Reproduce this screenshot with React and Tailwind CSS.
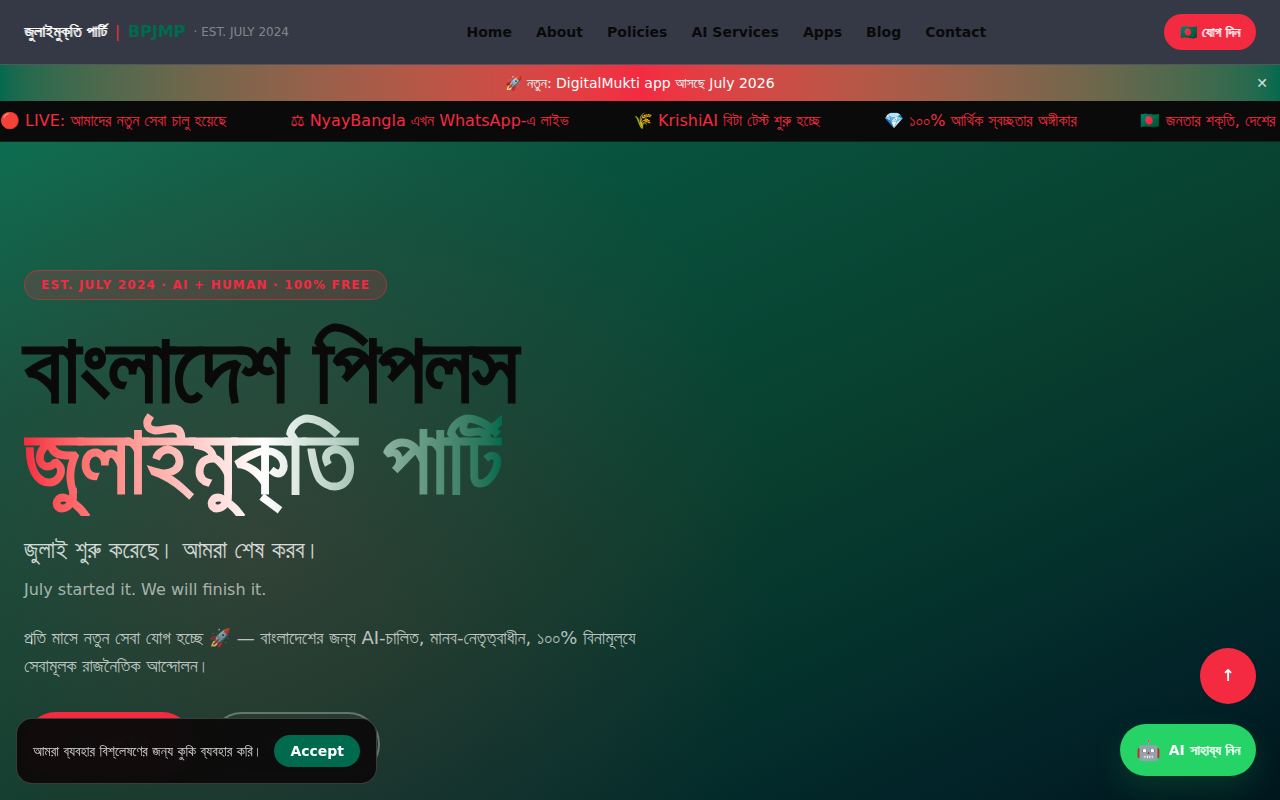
import { useState } from 'react';

const navLinks = ['Home', 'About', 'Policies', 'AI Services', 'Apps', 'Blog', 'Contact'];

// Keeps conjuncts joined inside a word
const Joined = ({ children }) => (
  <span className="[font-feature-settings:normal]">{children}</span>
);

const tickerItems = [
  { icon: '🔴', text: 'LIVE: আমাদের নতুন সেবা চালু হয়েছে' },
  { icon: '⚖', text: 'NyayBangla এখন WhatsApp-এ লাইভ' },
  { icon: '🌾', text: <Joined>KrishiAI বিটা টেস্ট শুরু হচ্ছে</Joined> },
  { icon: '💎', text: <>১০০% আর্থিক স্ব<Joined>চ্ছতার অঙ্গীকার</Joined></> },
  { icon: '🇧🇩', text: 'জনতার শক্তি, দেশের মুক্তি', flag: true }
];

// FreeSans has no bold Bengali face, so the weight is thickened by hand
const BoldBn = ({ children }) => (
  <span className="font-normal [text-shadow:1px_0_currentColor]">{children}</span>
);

const Header = () => (
  <header className="sticky top-0 z-40 border-b border-white/15 bg-[#353945]">
    <div className="flex h-16 items-center justify-between px-6">
      <a href="#home" className="flex items-center gap-2">
        <span className="text-white"><BoldBn>জুলাইমুক্তি পার্টি</BoldBn></span>
        <span className="text-[#f42a41]">|</span>
        <span className="font-bold text-[#006a4e]">BPJMP</span>
        <span className="text-xs text-white/40">· EST. JULY 2024</span>
      </a>
      <nav className="flex items-center gap-6">
        {navLinks.map(link => (
          <a key={link} href={`#${link}`} className="text-sm font-semibold text-[#0a0a0a]">
            {link}
          </a>
        ))}
      </nav>
      <button className="rounded-full bg-[#f42a41] px-4 py-2 text-sm font-bold text-white">
        🇧🇩 <BoldBn>যোগ দিন</BoldBn>
      </button>
    </div>
  </header>
);

const Announcement = ({ onClose }) => (
  <div className="relative bg-linear-to-r from-[#006a4e] via-[#f42a41] to-[#006a4e] px-4 py-2 text-center text-sm text-white">
    🚀 নতুন: DigitalMukti app আসছে July 2026
    <button
      onClick={onClose}
      aria-label="Close"
      className="absolute top-1/2 right-3 -translate-y-1/2 text-white/80"
    >
      ✕
    </button>
  </div>
);

const Ticker = () => (
  <div className="overflow-hidden border-b border-[#006a4e]/30 bg-[#0a0a0a] py-2">
    <div className="flex w-max gap-16 whitespace-nowrap text-[#f42a41]">
      {tickerItems.map(item => (
        <span key={item.icon}>
          <span className={item.flag ? "font-['Noto_Color_Emoji'] leading-none" : ''}>{item.icon}</span> {item.text}
        </span>
      ))}
    </div>
  </div>
);

const Hero = () => (
  <section className="relative min-h-screen overflow-hidden bg-[radial-gradient(circle_520px_at_20%_50%,rgba(244,42,65,0.18)_0%,transparent_100%),linear-gradient(155deg,#0a6e50_0%,#08543e_20%,#083e2e_50%,#04312c_65%,#022328_78%,#00141b_92%)] px-6 pt-32 pb-32">
    <div className="max-w-[640px]">
      <span className="inline-block rounded-full border border-[#f42a41]/50 bg-[#f42a41]/20 px-4 py-1.5 text-xs font-bold tracking-widest text-[#f42a41]">
        EST. JULY 2024 · AI + HUMAN · 100% FREE
      </span>
      <h1 className="mt-6 text-8xl leading-[0.95] font-normal tracking-[-2px] text-[#0a0a0a] [-webkit-text-stroke:3px_currentColor]">
        <span className="whitespace-nowrap">বাংলাদেশ পিপলস</span>
        <br />
        <span className="bg-linear-to-r from-[#f42a41] via-white to-[#006a4e] bg-clip-text whitespace-nowrap text-transparent">
          জুলাইমুক্তি পার্টি
        </span>
      </h1>
      <p className="mt-7 text-2xl text-white/80">জুলাই শুরু করেছে। আমরা শেষ করব।</p>
      <p className="mt-3 text-base text-white/60">July started it. We will finish it.</p>
      <p className="mt-5.5 text-lg leading-7 text-white/70">
        <Joined>প্রতি</Joined> মাসে নতুন সেবা যোগ <Joined>হচ্ছে</Joined> 🚀 — বাংলাদেশের জন্য AI-চালিত,
        মানব-নেতৃত্বাধীন, ১০০% বিনামূল্যে সেবামূলক রাজনৈতিক <Joined>আন্দোলন।</Joined>
      </p>
      <div className="mt-8 flex gap-4">
        <button className="min-w-[170px] rounded-full bg-[#f42a41] px-8 py-4 text-lg font-bold text-white">
          🇧🇩 <BoldBn>যোগ দিন</BoldBn>
        </button>
        <button className="min-w-[170px] rounded-full border-2 border-white/30 px-8 py-4 text-lg font-bold text-white">
          <BoldBn>সেবা দেখুন</BoldBn>
        </button>
      </div>
    </div>
  </section>
);

const CookieNotice = ({ onAccept }) => (
  <div className="fixed bottom-4 left-4 z-50 flex items-center gap-3 rounded-2xl border border-white/20 bg-[#0a0a0a]/97 p-4 backdrop-blur-2xl">
    <p className="text-sm text-white/80">আমরা ব্যবহার বিশ্লেষণের জন্য কুকি ব্যবহার করি।</p>
    <button
      onClick={onAccept}
      className="rounded-full bg-[#006a4e] px-4 py-1.5 text-sm font-bold text-white"
    >
      Accept
    </button>
  </div>
);

const FloatingActions = () => (
  <div className="fixed right-6 bottom-6 z-50 flex flex-col items-end gap-5">
    <button
      aria-label="Back to top"
      onClick={() => window.scrollTo({ top: 0, behavior: 'smooth' })}
      className="size-14 rounded-full bg-[#f42a41] font-bold text-white"
    >
      ↑
    </button>
    <button className="flex items-center gap-2 rounded-full bg-[#25d366] px-4 py-3 text-sm font-bold text-white shadow-[0_12px_30px_rgba(37,211,102,0.15)]">
      <span className="text-xl leading-7">🤖</span>
      <span>AI <BoldBn>সাহায্য নিন</BoldBn></span>
    </button>
  </div>
);

const App = () => {
  const [showBanner, setShowBanner] = useState(true);
  const [showCookies, setShowCookies] = useState(true);

  return (
    <div className="min-h-screen bg-[#0a0a0a] font-['DejaVu_Sans',FreeSans,sans-serif] [font-feature-settings:'blwf'_0,'pstf'_0,'half'_0]">
      <Header />
      {showBanner && <Announcement onClose={() => setShowBanner(false)} />}
      <Ticker />
      <Hero />
      {showCookies && <CookieNotice onAccept={() => setShowCookies(false)} />}
      <FloatingActions />
    </div>
  );
};

export default App;
